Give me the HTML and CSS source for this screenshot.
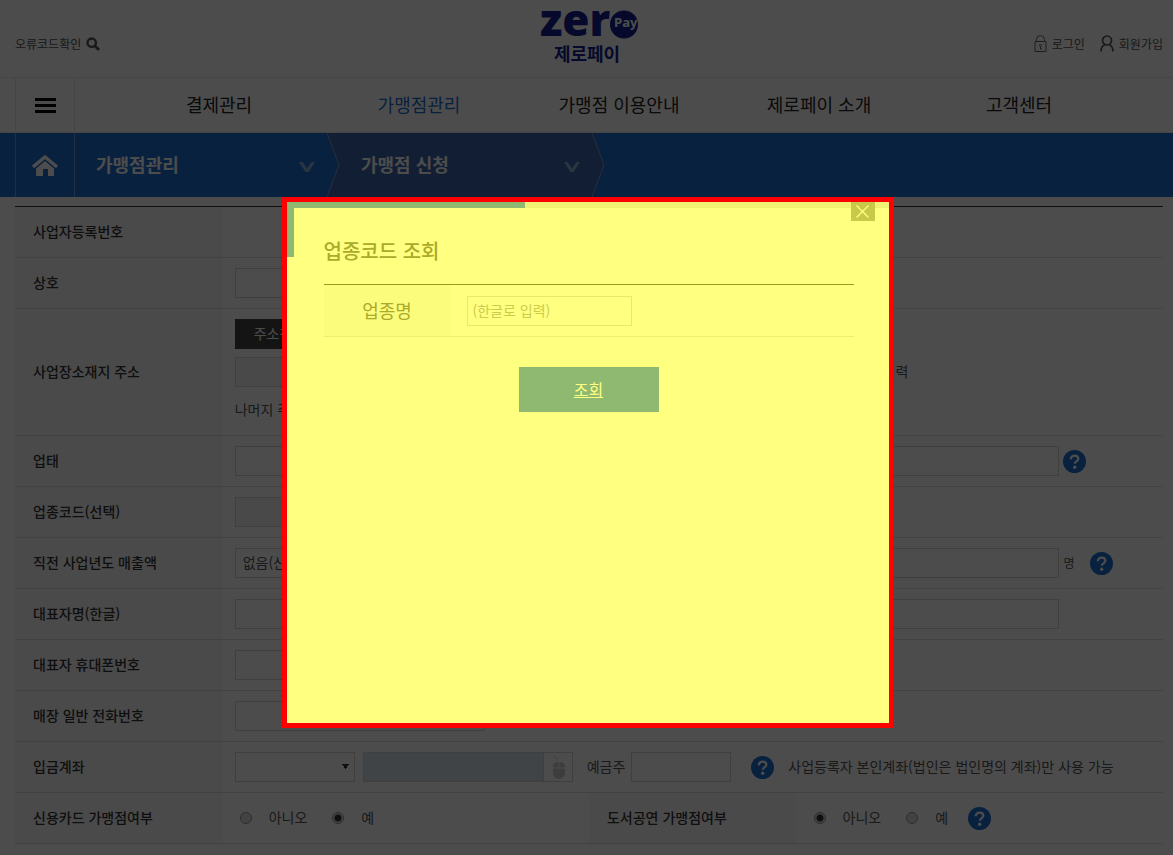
FILE: index.html
```html
<!DOCTYPE html>
<html lang="ko">
<head>
  <meta charset="UTF-8" />
  <meta name="viewport" content="width=device-width, initial-scale=1.0"/>
  <title>제로페이 가맹점 신청</title>
  <link rel="stylesheet" href="styles.css">
</head>
<body>
  <!-- Inline SVG icons -->
  <svg class="symbols">
    <symbol id="icon-help" viewBox="0 0 23 23">
      <circle cx="11.5" cy="11.5" r="11.5" fill="#1b6fd3"/>
      <path d="M7.8 9.2c0-2.2 1.6-3.6 3.8-3.6s3.7 1.3 3.7 3.2c0 2.6-3.5 2.6-3.5 5" fill="none" stroke="#fff" stroke-width="2.3"/>
      <circle cx="11.7" cy="17.2" r="1.7" fill="#fff"/>
    </symbol>
    <symbol id="icon-chevron" viewBox="0 0 17 12"><path d="M1 1h3.500l4.500 6.500L13.500 1H17l-6.500 10h-3z" fill="#8fb3dc"/></symbol>
  </svg>

  <header class="header">
    <div class="top">
      <a class="util" href="#">오류코드확인
        <svg width="14" height="14" viewBox="0 0 14 14"><circle cx="5.7" cy="5.7" r="4.2" fill="none" stroke="#555" stroke-width="2.4"/><path d="M9 9l4 4" stroke="#555" stroke-width="2.8"/></svg>
      </a>
      <a class="logo" href="#">
        <svg width="99" height="58" viewBox="0 0 99 58">
          <text x="0" y="26" class="logo-zero">zer</text>
          <circle cx="84" cy="14.500" r="14" fill="#141f93"/>
          <text x="74" y="17" class="logo-pay">Pay</text>
          <text x="47" y="51" class="logo-kr">제로페이</text>
        </svg>
      </a>
      <div class="member">
        <a class="util" href="#">
          <svg width="13" height="18" viewBox="0 0 13 18" fill="none" stroke="#666"><path d="M1 6.500h11v10H1zM2.500 6V4.500a4 4 0 0 1 8 0V6"/><circle cx="6.500" cy="10.500" r="1"/><path d="M6.500 11.500V14H8"/></svg>
          로그인</a>
        <a class="util" href="#">
          <svg width="14" height="17" viewBox="0 0 14 17" fill="none" stroke="#555" stroke-width="1.700"><circle cx="7" cy="5.500" r="4.500"/><path d="M1 16.500c0-3.500 1.200-5.500 3.500-6.500M13 16.500c0-3.500-1.200-5.500-3.500-6.500"/></svg>
          회원가입</a>
      </div>
    </div>
    <nav class="gnb">
      <button class="menu-btn" type="button" aria-label="전체메뉴"><i></i><i></i><i></i></button>
      <ul>
        <li><a href="#">결제관리</a></li>
        <li><a class="on" href="#">가맹점관리</a></li>
        <li><a href="#">가맹점 이용안내</a></li>
        <li><a href="#">제로페이 소개</a></li>
        <li><a href="#">고객센터</a></li>
      </ul>
    </nav>
  </header>

  <div class="lnb">
    <a class="home" href="#" aria-label="홈">
      <svg width="26" height="21" viewBox="0 0 26 21"><path d="M1 12L13 2l12 10" fill="none" stroke="#fff" stroke-width="3.400"/><path d="M4 13.500L13 6l9 7.500V20a1 1 0 0 1-1 1h-5v-7h-5v7H5a1 1 0 0 1-1-1z" fill="#fff"/></svg>
    </a>
    <a class="crumb" href="#">
      <span>가맹점관리</span>
      <svg class="chevron"><use href="#icon-chevron"></use></svg>
      <svg class="arrow" viewBox="0 0 13 64"><path d="M0 0h13v64H0l12-32z" fill="#3c65ab"/><path d="M0 0l12 32L0 64" fill="none" stroke="#8c9db8"/></svg>
    </a>
    <a class="crumb current" href="#">
      <span>가맹점 신청</span>
      <svg class="chevron"><use href="#icon-chevron"></use></svg>
      <svg class="arrow" viewBox="0 0 13 64"><path d="M0 0h13v64H0l12-32z" fill="#1b6fd3"/><path d="M0 0l12 32L0 64" fill="none" stroke="#8c9db8"/></svg>
    </a>
  </div>

  <main class="content">
    <form>
      <table class="form-table">
        <colgroup><col class="w18"><col class="w32"><col class="w18"><col class="w32"></colgroup>
        <tr>
          <th>사업자등록번호</th>
          <td colspan="3"></td>
        </tr>
        <tr>
          <th><label for="shop">상호</label></th>
          <td colspan="3"><input type="text" id="shop"></td>
        </tr>
        <tr>
          <th><label for="addr">사업장소재지 주소</label></th>
          <td colspan="3">
            <div class="stack">
              <button class="dark-btn" type="button">주소찾기</button>
              <div class="line"><input type="text" id="addr" class="long" readonly> <span>입력</span></div>
              <div class="line"><label for="addr2">나머지 주소</label> <input type="text" id="addr2"></div>
            </div>
          </td>
        </tr>
        <tr>
          <th><label for="biz">업태</label></th>
          <td><input type="text" id="biz"></td>
          <th></th>
          <td><div class="line"><input type="text" aria-label="종목"><svg class="help"><use href="#icon-help"></use></svg></div></td>
        </tr>
        <tr>
          <th><label for="code">업종코드(선택)</label></th>
          <td colspan="3"><input type="text" id="code" readonly></td>
        </tr>
        <tr>
          <th><label for="sales">직전 사업년도 매출액</label></th>
          <td><select id="sales"><option>없음(신규)</option></select></td>
          <th></th>
          <td><div class="line"><input type="text" id="staff" aria-label="종업원 수"><label class="unit" for="staff">명</label><svg class="help"><use href="#icon-help"></use></svg></div></td>
        </tr>
        <tr>
          <th><label for="ceo">대표자명(한글)</label></th>
          <td><input type="text" id="ceo"></td>
          <th></th>
          <td><input type="text" aria-label="대표자명"></td>
        </tr>
        <tr>
          <th><label for="mobile">대표자 휴대폰번호</label></th>
          <td colspan="3"><input type="text" id="mobile"></td>
        </tr>
        <tr>
          <th><label for="tel">매장 일반 전화번호</label></th>
          <td colspan="3"><input type="text" id="tel"></td>
        </tr>
        <tr>
          <th><label for="bank">입금계좌</label></th>
          <td colspan="3">
            <div class="line account">
              <select id="bank" class="bank"><option></option></select>
              <div class="secure">
                <input type="text" aria-label="계좌번호">
                <svg width="14" height="23" viewBox="0 0 14 23" fill="#ccc"><path d="M2 0l4 4" stroke="#ccc"/><path d="M1 11.500V10a5 5 0 0 1 5-4h.5v5.500zM7.500 6H8a5 5 0 0 1 5 4v1.500H7.500zM1 12.500h12V17a6 6 0 0 1-12 0z"/></svg>
              </div>
              <label for="owner" class="owner-label">예금주</label>
              <input type="text" id="owner" class="short">
              <svg class="help"><use href="#icon-help"></use></svg>
              <span class="note">사업등록자 본인계좌(법인은 법인명의 계좌)만 사용 가능</span>
            </div>
          </td>
        </tr>
        <tr>
          <th>신용카드 가맹점여부</th>
          <td>
            <div class="radios">
              <label><input type="radio" name="card"><span>아니오</span></label>
              <label><input type="radio" name="card" checked><span>예</span></label>
            </div>
          </td>
          <th>도서공연 가맹점여부</th>
          <td>
            <div class="radios">
              <label><input type="radio" name="book" checked><span>아니오</span></label>
              <label><input type="radio" name="book"><span>예</span></label>
              <svg class="help"><use href="#icon-help"></use></svg>
            </div>
          </td>
        </tr>
      </table>
    </form>
  </main>

  <div class="dim">
    <section class="popup" role="dialog" aria-labelledby="popup-title">
      <button class="close" type="button" aria-label="닫기">
        <svg width="13" height="13" viewBox="0 0 13 13"><path d="M.5.5l12 12M12.500.5l-12 12" stroke="#ffff80" stroke-width="1.300"/></svg>
      </button>
      <h2 id="popup-title">업종코드 조회</h2>
      <table class="popup-table">
        <tr>
          <th><label for="keyword">업종명</label></th>
          <td><input type="text" id="keyword" placeholder="(한글로 입력)"></td>
        </tr>
      </table>
      <a class="search-btn" href="#">조회</a>
    </section>
  </div>
</body>
</html>
```

FILE: styles.css
```css
* {
  margin: 0; padding: 0; box-sizing: border-box;
}
body {
  font-family: "Noto Sans CJK KR", sans-serif;
  font-size: 14px;
  line-height: 20px;
  color: #555;
  background: #fff;
}
a { color: inherit; text-decoration: none; }
ul { list-style: none; }
svg { display: block; flex-shrink: 0; }
.symbols { display: none; }

/* header */
.top {
  display: grid;
  grid-template-columns: 1fr auto 1fr;
  align-items: center;
  height: 77px;
  padding: 0 10px 0 15px;
}
.util {
  display: flex;
  align-items: center;
  gap: 5px;
  padding-top: 10px;
  font-size: 12px;
}
.member {
  display: flex;
  justify-content: flex-end;
  gap: 15px;
}
.logo svg { overflow: visible; }
.logo-zero {
  font: 800 44px "Open Sans", sans-serif;
  fill: #141f93;
}
.logo-pay {
  font: 700 13px "Open Sans", sans-serif;
  fill: #fff;
}
.logo-kr {
  font: 700 18px "Noto Sans CJK KR", sans-serif;
  fill: #141f93;
  text-anchor: middle;
}
.gnb {
  display: flex;
  height: 56px;
  padding: 0 10px 0 15px;
  border-top: 1px solid #e6e6e6;
  border-bottom: 1px solid #e6e6e6;
}
.menu-btn {
  display: flex;
  flex-direction: column;
  align-items: center;
  justify-content: center;
  gap: 3px;
  width: 60px;
  border: solid #e6e6e6;
  border-width: 0 1px;
  background: none;
}
.menu-btn i {
  width: 21px; height: 3px;
  background: #000;
}
.gnb ul {
  display: flex;
  flex: 1;
  padding: 0 44px;
}
.gnb li {
  flex: 1;
  text-align: center;
  font-size: 18px;
  line-height: 52px;
  color: #222;
}
.gnb .on { color: #1b6fd3; }

/* breadcrumb */
.lnb {
  display: flex;
  height: 64px;
  padding-left: 15px;
  background: #1b6fd3;
}
.home {
  display: flex;
  align-items: center;
  justify-content: center;
  width: 60px;
  border: solid #6f9fd8;
  border-width: 0 1px;
}
.crumb {
  display: flex;
  align-items: center;
  gap: 12px;
  width: 265px;
  padding-left: 21px;
  font-size: 18px;
  font-weight: 700;
  color: #fff;
}
.crumb span {
  flex: 1;
  padding-bottom: 2px;
}
.current { background: #3c65ab; }
.chevron {
  width: 17px; height: 12px;
  margin-top: 4px;
}
.arrow { width: 13px; height: 64px; }

/* form */
.content { padding: 9px 10px 0 15px; }
.form-table {
  width: 100%;
  table-layout: fixed;
  border-spacing: 0;
  border-top: 1px solid #333;
}
.w18 { width: 18%; }
.w32 { width: 32%; }
.form-table th, .form-table td {
  height: 51px;
  border-bottom: 1px solid #ddd;
  text-align: left;
}
.form-table th {
  padding: 0 0 2px 18px;
  font-weight: 500;
  color: #333;
  background: #f8f8f8;
}
.form-table td { padding: 10px 0 10px 13px; }
input[type="text"], select {
  display: block;
  width: 250px;
  height: 30px;
  padding: 0 7px 2px;
  border: 1px solid #d3d3d3;
  font: 14px "Noto Sans CJK KR", sans-serif;
  color: #555;
  background: #fff;
  appearance: none;
}
input[readonly] { background: #f3f3f3; }
.stack {
  display: flex;
  flex-direction: column;
  align-items: flex-start;
  gap: 8px;
}
.dark-btn {
  height: 30px;
  padding: 0 19px 2px;
  border: 0;
  font: 14px "Noto Sans CJK KR", sans-serif;
  color: #fff;
  background: #444;
}
.line {
  display: flex;
  align-items: center;
  gap: 4px;
}
.line label, .line span { padding-bottom: 2px; }
.line .long { width: 644px; }
.line .short { width: 100px; }
.line .bank { width: 120px; }
.bank {
  background: linear-gradient(to bottom right, #333 50%, transparent 50%) no-repeat 109px 11px / 4px 6px,
    linear-gradient(to bottom left, #333 50%, transparent 50%) no-repeat 106px 11px / 4px 6px #fff;
}
.line .unit {
  padding: 0 11px 0 1px;
  font-size: 12px;
}
.help { width: 23px; height: 23px; }
.secure {
  display: flex;
  align-items: center;
  gap: 8px;
  width: 210px;
  height: 30px;
  margin-left: 4px;
  border: 1px solid #d3d3d3;
}
.secure input[type="text"] {
  width: 180px;
  height: 28px;
  border-width: 0 1px 0 0;
  background: #d8e5ed;
}
.line .owner-label { padding: 0 2px 2px 10px; }
.account .help { margin-left: 16px; }
.note { padding-left: 10px; }
.radios {
  display: flex;
  align-items: center;
}
.radios label {
  display: flex;
  align-items: center;
  gap: 17px;
  padding: 0 20px 0 5px;
}
.radios span { padding-bottom: 2px; }
input[type="radio"] {
  width: 12px; height: 12px;
  border: 1px solid #999;
  border-radius: 50%;
  background: #ddd;
  appearance: none;
}
input[type="radio"]:checked {
  background: radial-gradient(circle, #333 3px, #ddd 4px);
}

/* popup */
.dim {
  position: fixed;
  inset: 0;
  display: flex;
  justify-content: center;
  align-items: flex-start;
  padding: 197px 10px 0 12px;
  background: rgba(0, 0, 0, 0.7);
}
.popup {
  position: relative;
  width: 612px;
  min-height: 531px;
  padding: 36px 35px 0 37px;
  border: 5px solid #f00;
  color: #aaaa2b;
  background: linear-gradient(#8fb971, #8fb971) no-repeat 0 0 / 238px 6px,
    linear-gradient(#8fb971, #8fb971) no-repeat 0 0 / 7px 55px,
    linear-gradient(#f2f272, #f2f272) no-repeat 0 0 / 100% 6px,
    #ffff80;
}
.close {
  position: absolute;
  top: 0; right: 14px;
  display: flex;
  align-items: center;
  justify-content: center;
  width: 24px;
  height: 19px;
  border: 0;
  background: #c8c849;
}
.popup h2 {
  font-size: 20px;
  font-weight: 500;
  line-height: 26px;
}
.popup-table {
  width: 100%;
  margin-top: 20px;
  border-spacing: 0;
  border-top: 1px solid #9a9a1c;
}
.popup-table th, .popup-table td {
  height: 52px;
  border-bottom: 1px solid #eeee6e;
}
.popup-table th {
  width: 127px;
  padding-bottom: 2px;
  font-size: 18px;
  font-weight: 400;
  background: #fcfc7c;
}
.popup-table td { padding-left: 16px; }
.popup-table input[type="text"] {
  width: 165px;
  padding: 0 5px 2px;
  border-color: #e9e969;
  color: #aaaa2b;
  background: #ffff80;
}
.popup-table input::placeholder { color: #cccc4c; }
.search-btn {
  display: block;
  width: 140px;
  margin: 30px auto 0;
  font-size: 16px;
  line-height: 45px;
  text-align: center;
  text-decoration: underline;
  color: #ffff80;
  background: #8fb971;
}
```
